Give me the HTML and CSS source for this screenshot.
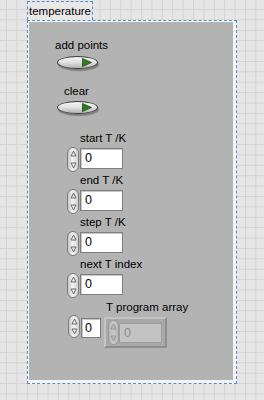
FILE: index.html
```html
<!DOCTYPE html>
<html lang="en">
<head>
    <meta charset="UTF-8">
    <title>temperature</title>
    <link rel="stylesheet" href="styles.css">
</head>
<body>
    <div class="cluster-label">temperature</div>
    <div class="cluster">
        <div class="panel">
            <div class="caption cap-add">add points</div>
            <div class="bool bool-add">
                <svg width="10" height="9" viewBox="0 0 10 9"><polygon points="0.5,0.5 9.5,4.5 0.5,8.5" fill="#2d7d20" stroke="#1d5414" stroke-width="0.8"/></svg>
            </div>

            <div class="caption cap-clear">clear</div>
            <div class="bool bool-clear">
                <svg width="10" height="9" viewBox="0 0 10 9"><polygon points="0.5,0.5 9.5,4.5 0.5,8.5" fill="#2d7d20" stroke="#1d5414" stroke-width="0.8"/></svg>
            </div>

            <div class="numeric first">
                <div class="caption">start T /K</div>
                <div class="num-row">
                    <div class="spin">
                        <svg width="7" height="7" viewBox="0 0 7 7"><polygon points="1,6 3.5,1 6,6" fill="#ececec" stroke="#6a6a6a"/></svg>
                        <svg width="7" height="7" viewBox="0 0 7 7"><polygon points="1,1 3.5,6 6,1" fill="#ececec" stroke="#6a6a6a"/></svg>
                    </div>
                    <div class="num-box">0</div>
                </div>
            </div>

            <div class="numeric">
                <div class="caption">end T /K</div>
                <div class="num-row">
                    <div class="spin">
                        <svg width="7" height="7" viewBox="0 0 7 7"><polygon points="1,6 3.5,1 6,6" fill="#ececec" stroke="#6a6a6a"/></svg>
                        <svg width="7" height="7" viewBox="0 0 7 7"><polygon points="1,1 3.5,6 6,1" fill="#ececec" stroke="#6a6a6a"/></svg>
                    </div>
                    <div class="num-box">0</div>
                </div>
            </div>

            <div class="numeric">
                <div class="caption">step T /K</div>
                <div class="num-row">
                    <div class="spin">
                        <svg width="7" height="7" viewBox="0 0 7 7"><polygon points="1,6 3.5,1 6,6" fill="#ececec" stroke="#6a6a6a"/></svg>
                        <svg width="7" height="7" viewBox="0 0 7 7"><polygon points="1,1 3.5,6 6,1" fill="#ececec" stroke="#6a6a6a"/></svg>
                    </div>
                    <div class="num-box">0</div>
                </div>
            </div>

            <div class="numeric">
                <div class="caption">next T index</div>
                <div class="num-row">
                    <div class="spin">
                        <svg width="7" height="7" viewBox="0 0 7 7"><polygon points="1,6 3.5,1 6,6" fill="#ececec" stroke="#6a6a6a"/></svg>
                        <svg width="7" height="7" viewBox="0 0 7 7"><polygon points="1,1 3.5,6 6,1" fill="#ececec" stroke="#6a6a6a"/></svg>
                    </div>
                    <div class="num-box">0</div>
                </div>
            </div>

            <div class="array">
                <div class="caption array-cap">T program array</div>
                <div class="array-row">
                    <div class="spin index-spin">
                        <svg width="7" height="7" viewBox="0 0 7 7"><polygon points="1,6 3.5,1 6,6" fill="#ececec" stroke="#6a6a6a"/></svg>
                        <svg width="7" height="7" viewBox="0 0 7 7"><polygon points="1,1 3.5,6 6,1" fill="#ececec" stroke="#6a6a6a"/></svg>
                    </div>
                    <div class="num-box index-box">0</div>
                    <div class="array-frame">
                        <div class="spin disabled">
                            <svg width="7" height="7" viewBox="0 0 7 7"><polygon points="1,6 3.5,1 6,6" fill="#bcbcbc" stroke="#979797"/></svg>
                            <svg width="7" height="7" viewBox="0 0 7 7"><polygon points="1,1 3.5,6 6,1" fill="#bcbcbc" stroke="#979797"/></svg>
                        </div>
                        <div class="num-box disabled-box">0</div>
                    </div>
                </div>
            </div>
        </div>
    </div>
</body>
</html>
```

FILE: styles.css
```css
body {
    margin: 0;
    padding-top: 1px;
    height: 399px;
    overflow: hidden;
    font-family: "Liberation Sans", Arial, sans-serif;
    font-size: 11.5px;
    line-height: 13px;
    color: #000;
    background:
        linear-gradient(90deg, #d3d3d3 1px, transparent 1px) 6px 0 / 10.4px 10.4px,
        linear-gradient(#d3d3d3 1px, transparent 1px) 0 9px / 10.4px 10.4px,
        #e6e6e6;
}

.cluster-label {
    display: inline-block;
    box-sizing: border-box;
    height: 19px;
    margin-left: 27px;
    padding: 3px 1px 0 1px;
    border: 1px dashed #5a8ec8;
    border-bottom: none;
    background-color: #e8e8e8;
}

.cluster {
    box-sizing: border-box;
    width: 210px;
    height: 364px;
    margin-left: 27px;
    padding: 1px 3px 3px 1px;
    border: 1px dashed #5a8ec8;
    background-color: #f4f4f4;
}

.panel {
    box-sizing: border-box;
    height: 100%;
    background-color: #b3b3b3;
    display: flex;
    flex-direction: column;
    align-items: flex-start;
}

.caption {
    white-space: nowrap;
}

.cap-add {
    margin: 17px 0 0 26px;
}

.cap-clear {
    margin: 16px 0 0 35px;
}

.bool {
    box-sizing: border-box;
    width: 41px;
    height: 13px;
    margin-left: 28px;
    padding-right: 5px;
    border: 1px solid #3e3e3e;
    border-radius: 50%;
    background: linear-gradient(#f6f6f6, #e0e0e0 50%, #b4b4b4);
    box-shadow: 1px 2px 1px rgba(0, 0, 0, 0.3);
    display: flex;
    align-items: center;
    justify-content: flex-end;
}

.bool-add {
    margin-top: 4px;
}

.bool-clear {
    margin-top: 3px;
}

.numeric {
    margin: 2px 0 0 38px;
}

.numeric.first {
    margin-top: 18px;
}

.numeric .caption {
    margin-left: 13px;
}

.num-row {
    display: flex;
    align-items: flex-start;
    margin-top: 2px;
}

.spin {
    box-sizing: border-box;
    width: 12px;
    height: 25px;
    padding: 2px 0;
    border: 1px solid #7c7c7c;
    border-radius: 6px;
    background: linear-gradient(90deg, #c6c6c6, #f3f3f3 45%, #d2d2d2);
    display: flex;
    flex-direction: column;
    align-items: center;
    justify-content: space-between;
}

.num-box {
    box-sizing: border-box;
    width: 43px;
    height: 21px;
    margin: 1px 0 0 1px;
    padding-left: 4px;
    border: 1px solid #7e7e7e;
    box-shadow: inset 1px 1px 0 #c8c8c8;
    background-color: #fff;
    font-size: 12.5px;
    line-height: 19px;
    color: #000;
}

.array {
    margin: 3px 0 0 39px;
}

.array-cap {
    margin-left: 38px;
}

.array-row {
    display: flex;
    align-items: flex-start;
    margin-top: 1px;
}

.index-spin {
    height: 23px;
}

.index-box {
    width: 20px;
    height: 20px;
    margin-top: 3px;
    padding-left: 3px;
    line-height: 18px;
}

.array-frame {
    box-sizing: border-box;
    width: 63px;
    height: 31px;
    margin: 2px 0 0 3px;
    padding: 1px 0 0 2px;
    border: 2px solid;
    border-color: #c4c4c4 #8e8e8e #8e8e8e #c4c4c4;
    background-color: #a9a9a9;
    display: flex;
    align-items: flex-start;
}

.spin.disabled {
    width: 11px;
    height: 25px;
    border-color: #999;
    background: linear-gradient(90deg, #b4b4b4, #cacaca 45%, #b8b8b8);
}

.disabled-box {
    width: 43px;
    height: 20px;
    margin: 3px 0 0 0;
    border-color: #9c9c9c;
    box-shadow: none;
    background-color: #c3c3c3;
    color: #8c8c8c;
    line-height: 18px;
}
```
